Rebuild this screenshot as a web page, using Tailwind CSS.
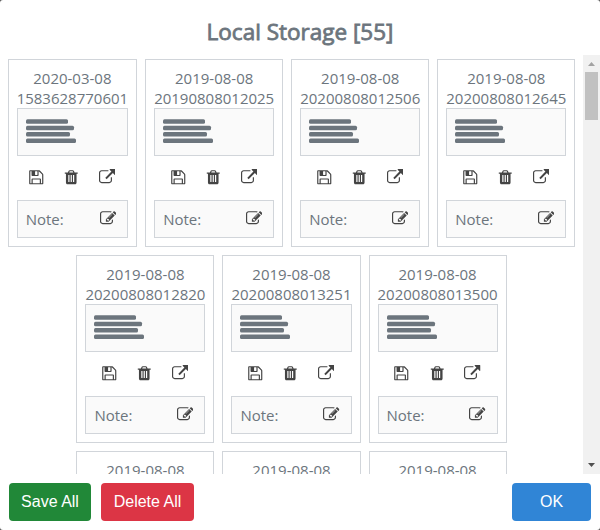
<!DOCTYPE html>
<html lang="en">
<head>
<meta charset="utf-8">
<title>Local Storage</title>
<script src="https://cdn.jsdelivr.net/npm/@tailwindcss/browser@4"></script>
</head>
<body class="bg-[#555]">
<svg class="hidden">
  <symbol id="save" viewBox="0 0 1792 1792"><path d="M512 1536h768v-384h-768v384zm896 0h128v-896q0-14-10-38.500t-20-34.500l-281-281q-10-10-34-20t-39-10v416q0 40-28 68t-68 28h-576q-40 0-68-28t-28-68v-416h-128v1280h128v-416q0-40 28-68t68-28h832q40 0 68 28t28 68v416zm-384-928v-320q0-13-9.500-22.500t-22.500-9.500h-192q-13 0-22.500 9.500t-9.500 22.500v320q0 13 9.500 22.500t22.500 9.500h192q13 0 22.500-9.500t9.500-22.500zm640 32v928q0 40-28 68t-68 28h-1344q-40 0-68-28t-28-68v-1344q0-40 28-68t68-28h928q40 0 88 20t76 48l280 280q28 28 48 76t20 88z"/></symbol>
  <symbol id="trash" viewBox="0 0 1792 1792"><path d="M704 1376v-704q0-14-9-23t-23-9h-64q-14 0-23 9t-9 23v704q0 14 9 23t23 9h64q14 0 23-9t9-23zm256 0v-704q0-14-9-23t-23-9h-64q-14 0-23 9t-9 23v704q0 14 9 23t23 9h64q14 0 23-9t9-23zm256 0v-704q0-14-9-23t-23-9h-64q-14 0-23 9t-9 23v704q0 14 9 23t23 9h64q14 0 23-9t9-23zm-544-992h448l-48-117q-7-9-17-11h-317q-10 2-17 11zm928 32v64q0 14-9 23t-23 9h-96v948q0 83-47 143.500t-113 60.500h-832q-66 0-113-58.500t-47-141.500v-952h-96q-14 0-23-9t-9-23v-64q0-14 9-23t23-9h309l70-167q15-37 54-63t79-26h320q40 0 79 26t54 63l70 167h309q14 0 23 9t9 23z"/></symbol>
  <symbol id="open" viewBox="0 0 1792 1792"><path d="M1408 928v320q0 119-84.500 203.500t-203.500 84.500h-832q-119 0-203.500-84.500t-84.500-203.500v-832q0-119 84.500-203.500t203.500-84.500h704q14 0 23 9t9 23v64q0 14-9 23t-23 9h-704q-66 0-113 47t-47 113v832q0 66 47 113t113 47h832q66 0 113-47t47-113v-320q0-14 9-23t23-9h64q14 0 23 9t9 23zm384-864v512q0 26-19 45t-45 19-45-19l-176-176-652 652q-10 10-23 10t-23-10l-114-114q-10-10-10-23t10-23l652-652-176-176q-19-19-19-45t19-45 45-19h512q26 0 45 19t19 45z"/></symbol>
  <symbol id="edit" viewBox="0 0 1792 1792"><path d="M888 1184l116-116-152-152-116 116v56h96v96h56zm440-720q-16-16-33 1l-350 350q-17 17-1 33t33-1l350-350q17-17 1-33zm80 594v190q0 119-84.500 203.500t-203.500 84.500h-832q-119 0-203.500-84.500t-84.500-203.500v-832q0-119 84.500-203.500t203.500-84.500h832q63 0 117 25 15 7 18 23 3 17-9 29l-49 49q-14 14-32 8-23-6-45-6h-832q-66 0-113 47t-47 113v832q0 66 47 113t113 47h832q66 0 113-47t47-113v-126q0-13 9-22l64-64q15-15 35-7t20 29zm-96-738l288 288-672 672h-288v-288zm444 132l-92 92-288-288 92-92q28-28 68-28t68 28l152 152q28 28 28 68t-28 68z"/></symbol>
</svg>
<main class="flex h-[530px] w-[600px] flex-col overflow-hidden rounded-[3px] bg-white font-['Open_Sans',sans-serif] text-[15px] leading-5 text-[#6c757d]">
  <h1 class="h-[55px] shrink-0 pt-4 text-center text-[22.5px] leading-8 [-webkit-text-stroke:0.8px_#6c757d]">Local Storage [55]</h1>
  <div class="flex h-[419px] shrink-0 overflow-hidden">
    <div id="list" class="flex w-[583px] flex-wrap content-start justify-center"></div>
    <div class="flex w-[17px] flex-col items-center bg-[#f1f1f1]">
      <svg class="h-[17px] w-[17px] shrink-0" viewBox="0 0 17 17"><path d="M5 11h7L8.500 7z" fill="#a3a3a3"/></svg>
      <div class="h-12 w-[13px] bg-[#c1c1c1]"></div>
      <svg class="mt-auto h-[17px] w-[17px] shrink-0" viewBox="0 0 17 17"><path d="M5 6h7L8.500 10z" fill="#505050"/></svg>
    </div>
  </div>
  <div class="flex gap-2.5 px-[9px] pt-[9px] font-['Liberation_Sans',Arial,sans-serif] text-base text-white">
    <button class="h-[38px] w-[82px] rounded bg-[#218838]">Save All</button>
    <button class="h-[38px] w-[93px] rounded bg-[#dc3545]">Delete All</button>
    <button class="ml-auto h-[38px] w-[79px] rounded bg-[#3085d6]">OK</button>
  </div>
</main>
<template id="card">
  <article class="m-1 h-[188px] border border-[#d1d5da] p-2 text-center">
    <div class="date"></div>
    <div class="key"></div>
    <div class="h-12 border border-[#d1d5da] bg-[#fafafa] pt-[10px] pl-2">
      <svg class="block h-[26px] w-[52px] fill-[#6c757d]" viewBox="0 0 52 26">
        <rect y="0.300" width="42" height="4.500" rx="1.500"/>
        <rect y="6.700" width="48" height="4.500" rx="1.500"/>
        <rect y="13.100" width="44" height="4.500" rx="1.500"/>
        <rect y="19.500" width="50" height="4.500" rx="1.500"/>
      </svg>
    </div>
    <div class="flex h-11 items-center justify-center gap-[19px] pr-[0.5px] pb-0.5 text-[#444]">
      <svg class="-ml-px size-[16.5px] fill-current"><use href="#save"/></svg>
      <svg class="size-[16.5px] fill-current"><use href="#trash"/></svg>
      <svg class="size-[16.5px] fill-current"><use href="#open"/></svg>
    </div>
    <div class="flex h-[38px] items-center justify-between border border-[#d1d5da] bg-[#fafafa] pr-[11px] pl-2">
      <span>Note:</span>
      <svg class="mb-px size-[16.5px] fill-[#444]"><use href="#edit"/></svg>
    </div>
  </article>
</template>
<script>
const entries = [
  ['2020-03-08', '1583628770601'], ['2019-08-08', '20190808012025'],
  ['2019-08-08', '20200808012506'], ['2019-08-08', '20200808012645'],
  ['2019-08-08', '20200808012820'], ['2019-08-08', '20200808013251'],
  ['2019-08-08', '20200808013500'], ['2019-08-08', '20200808013612'],
  ['2019-08-08', '20200808013745'], ['2019-08-08', '20200808013901'],
];
const list = document.getElementById('list');
for (const [date, key] of entries) {
  const node = document.getElementById('card').content.cloneNode(true);
  node.querySelector('.date').textContent = date;
  node.querySelector('.key').textContent = key;
  list.append(node);
}
</script>
</body>
</html>
